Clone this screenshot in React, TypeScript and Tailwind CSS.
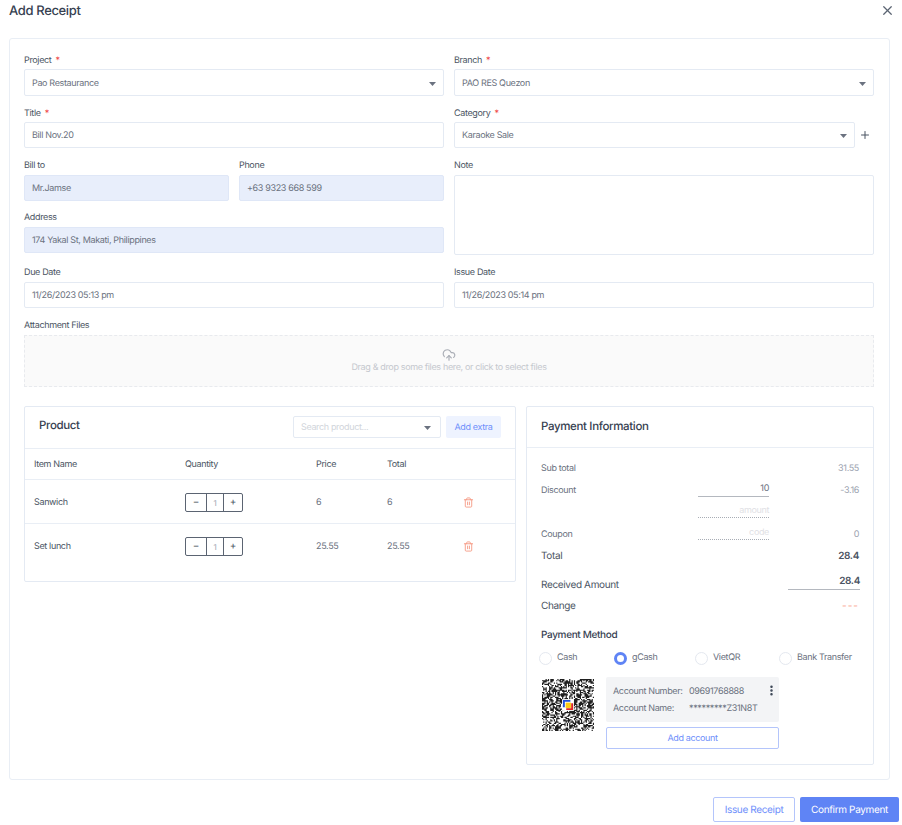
import React from "react";
import { X, Plus, Trash2, CloudUpload, EllipsisVertical } from "lucide-react";

const Caret = () => (
  <svg width="7" height="4" viewBox="0 0 7 4" className="shrink-0">
    <path d="M0 0h7L3.5 4z" fill="#6b7280" />
  </svg>
);

const Req = () => <span className="ml-[4px] text-[#ef4444]">*</span>;

function Label({ text, req, low }: { text: string; req?: boolean; low?: boolean }) {
  return (
    <div className={`h-[14px] text-[9px] leading-[9px] text-[#4b5563] ${low ? "pt-[1px]" : ""}`}>
      {text}
      {req && <Req />}
    </div>
  );
}

function Box({ children, blue, h = "h-[26px]" }: { children?: React.ReactNode; blue?: boolean; h?: string }) {
  return (
    <div
      className={`${h} flex items-center justify-between rounded-[2px] border pl-[7px] pr-[7px] pt-[2px] text-[9px] text-[#6b7280] ${
        blue ? "border-[#dfe7f7] bg-[#e8eefb]" : "border-[#e4eaf3] bg-white"
      }`}
    >
      {children}
    </div>
  );
}

function Field({ label, req, value, blue, select, h, low, className }: { label: string; req?: boolean; value: string; blue?: boolean; select?: boolean; h?: string; low?: boolean; className?: string }) {
  return (
    <div className={className}>
      <Label text={label} req={req} low={low} />
      <Box blue={blue} h={h}>
        <span>{value}</span>
        {select && <Caret />}
      </Box>
    </div>
  );
}

function Stepper() {
  return (
    <div className="flex h-[19px] w-[58px] items-stretch rounded-[2px] border border-[#5b6472] text-[#4b5563]">
      <div className="flex w-[20px] items-center justify-center text-[10px]">−</div>
      <div className="flex w-[18px] items-center justify-center border-x border-[#5b6472] text-[8px] text-[#9ca3af]">1</div>
      <div className="flex flex-1 items-center justify-center text-[10px]">+</div>
    </div>
  );
}

function ProductRow({ name, price, total }: { name: string; price: string; total: string }) {
  return (
    <div className="grid h-[44px] grid-cols-[151px_131px_71px_76px_1fr] items-center border-t border-[#e9eef5] pl-[9px] pt-[2px] text-[9px] text-[#6b7280]">
      <span className="text-[#4b5563]">{name}</span>
      <Stepper />
      <span>{price}</span>
      <span>{total}</span>
      <Trash2 size={11} color="#f59a84" />
    </div>
  );
}

function Radio({ label, on, className }: { label: string; on?: boolean; className: string }) {
  return (
    <div className={`flex items-center text-[9px] text-[#6b7280] ${className}`}>
      <span className={`mr-[5px] size-[13px] shrink-0 rounded-full ${on ? "border-[3.5px] border-[#5f84f5] bg-white" : "border border-[#e4e8ef] bg-white"}`} />
      {label}
    </div>
  );
}

const qr = (() => {
  const n = 44;
  let seed = 73;
  let d = "";
  for (let y = 0; y < n; y++) {
    for (let x = 0; x < n; x++) {
      seed = (seed * 1103515245 + 12345) & 0x7fffffff;
      if ((seed >> 16) % 100 < 52) d += `M${x} ${y}h1v1h-1z`;
    }
  }
  return d;
})();

function QrCode() {
  return (
    <svg width="52" height="52" viewBox="0 0 44 44" className="shrink-0">
      <rect width="44" height="44" fill="#fff" />
      <path d={qr} fill="#1f1f1f" />
      <rect x="17" y="17" width="10" height="10" fill="#fff" />
      <path d="M18.5 24V18.5H24" fill="none" stroke="#1d4ed8" strokeWidth="1.6" />
      <rect x="20" y="20" width="4.5" height="4.5" fill="#facc15" />
      <path d="M25.5 20.5V25.5H20.5" fill="none" stroke="#dc2626" strokeWidth="1.6" />
    </svg>
  );
}

const line = "border-b border-[#b4b8bf]";
const dotted = "border-b border-dotted border-[#a8adb5]";

export default function App() {
  return (
    <div className="h-[825px] w-[902px] overflow-hidden bg-white font-['Inter',sans-serif] tracking-[-0.35px] [text-rendering:geometricPrecision]">
      <div className="flex h-[38px] items-start justify-between pl-[9px] pr-[7px]">
        <h1 className="mt-[3px] text-[13px] font-medium leading-[17px] text-[#374151]">Add Receipt</h1>
        <X size={15} color="#5b6472" className="mt-[3px]" />
      </div>

      <div className="ml-[9px] h-[742px] w-[881px] rounded-[3px] border border-[#e9eef5] px-[14px] pt-[16px]">
        <div className="grid grid-cols-[420px_420px] grid-rows-[53px_53px_52px_55px_53px_66px] gap-x-[10px]">
          <Field label="Project" req low value="Pao Restaurance" select h="h-[27px]" />
          <Field label="Branch" req low value="PAO RES Quezon" select h="h-[27px]" />
          <Field label="Title" req low value="Bill Nov.20" />
          <div>
            <Label text="Category" req low />
            <div className="flex items-center">
              <div className="w-[401px]">
                <Box>
                  <span>Karaoke Sale</span>
                  <Caret />
                </Box>
              </div>
              <Plus size={12} color="#4b5563" className="ml-[4px]" />
            </div>
          </div>
          <div className="col-start-1 row-start-3 grid grid-cols-[205px_205px] gap-x-[10px]">
            <Field label="Bill to" value="Mr.Jamse" blue />
            <Field label="Phone" value="+63 9323 668 599" blue />
          </div>
          <Field className="col-start-1 row-start-4" label="Address" value="174 Yakal St, Makati, Philippines" blue />
          <div className="col-start-2 row-span-2 row-start-3">
            <Label text="Note" />
            <Box h="h-[80px]" />
          </div>
          <Field label="Due Date" value="11/26/2023 05:13 pm" />
          <Field label="Issue Date" value="11/26/2023 05:14 pm" />
          <div className="col-span-2">
            <Label text="Attachment Files" />
            <div className="flex h-[52px] flex-col items-center justify-center border border-dashed border-[#e8eaee] bg-[#fafafa] pt-[1px] text-[9px] text-[#c5c8ce]">
              <CloudUpload size={14} color="#a9adb5" />
              <span className="-mt-[1px]">Drag &amp; drop some files here, or click to select files</span>
            </div>
          </div>
        </div>

        <div className="mt-[19px] flex items-start gap-[10px]">
          <section className="h-[176px] w-[492px] rounded-[2px] border border-[#e4eaf3]">
            <div className="flex h-[41px] items-start pl-[14px] pr-[14px] pt-[9px]">
              <h2 className="mt-[1px] flex-1 text-[11.5px] font-medium leading-[16px] text-[#374151]">Product</h2>
              <div className="flex h-[22px] w-[148px] items-center justify-between rounded-[2px] border border-[#e4eaf3] pl-[7px] pr-[9px] pt-[1px] text-[9px] text-[#d1d5db]">
                <span>Search product...</span>
                <Caret />
              </div>
              <div className="ml-[5px] flex h-[22px] w-[55px] items-center justify-center rounded-[2px] bg-[#eef3ff] pt-[1px] text-[9px] text-[#6f8ffb]">Add extra</div>
            </div>
            <div className="grid h-[31px] grid-cols-[151px_131px_71px_1fr] items-center border-t border-[#e9eef5] pl-[9px] pt-[2px] text-[9px] text-[#4b5563]">
              <span>Item Name</span>
              <span>Quantity</span>
              <span>Price</span>
              <span>Total</span>
            </div>
            <ProductRow name="Sanwich" price="6" total="6" />
            <ProductRow name="Set lunch" price="25.55" total="25.55" />
          </section>

          <section className="h-[359px] w-[348px] rounded-[2px] border border-[#e4eaf3]">
            <div className="flex h-[40px] items-center pl-[14px] text-[11.5px] font-medium text-[#374151]">Payment Information</div>
            <div className="border-t border-[#e9eef5] pl-[14px] pr-[14px] pt-[10px] text-[9px] text-[#6b7280]">
              <div className="grid h-[22px] grid-cols-[157px_71px_90px] items-center">
                <span className="text-[#6b7280]">Sub total</span>
                <span />
                <span className="text-right text-[#9ca3af]">31.55</span>
              </div>
              <div className="grid h-[22px] grid-cols-[157px_71px_90px] items-center">
                <span>Discount</span>
                <div className={`mt-[1px] h-[16px] self-start text-right leading-[15px] ${line}`}>10</div>
                <span className="text-right text-[#9ca3af]">-3.16</span>
              </div>
              <div className="grid h-[22px] grid-cols-[157px_71px_90px]">
                <span />
                <div className={`mt-[1px] h-[15px] text-right leading-[15px] text-[#dfe1e5] ${dotted}`}>amount</div>
              </div>
              <div className="grid h-[22px] grid-cols-[157px_71px_90px] items-center">
                <span>Coupon</span>
                <div className={`mt-[1px] h-[15px] self-start text-right leading-[15px] text-[#dfe1e5] ${dotted}`}>code</div>
                <span className="text-right text-[#9ca3af]">0</span>
              </div>
              <div className="flex h-[20px] items-center justify-between text-[10px]">
                <span className="text-[#4b5563]">Total</span>
                <span className="font-semibold text-[#4b5563]">28.4</span>
              </div>
              <div className="mt-[7px] grid h-[24px] grid-cols-[247px_72px] items-center text-[10px] text-[#4b5563]">
                <span>Received Amount</span>
                <div className={`h-[17px] self-start text-right font-semibold leading-[16px] ${line}`}>28.4</div>
              </div>
              <div className="flex h-[18px] items-center justify-between text-[10px] text-[#4b5563]">
                <span>Change</span>
                <span className="font-semibold tracking-[1px] text-[#fbb6a6]">---</span>
              </div>
              <div className="mt-[13px] h-[14px] text-[10px] font-medium leading-[14px] text-[#374151]">Payment Method</div>
              <div className="-ml-[2px] mt-[9px] flex h-[14px] items-center">
                <Radio label="Cash" className="w-[75px]" />
                <Radio on label="gCash" className="w-[81px]" />
                <Radio label="VietQR" className="w-[84px]" />
                <Radio label="Bank Transfer" className="" />
              </div>
              <div className="mt-[12px] flex items-start">
                <div className="ml-[1px] mt-[2px]">
                  <QrCode />
                </div>
                <div className="ml-[12px] w-[173px]">
                  <div className="relative h-[45px] rounded-[2px] bg-[#f3f4f6] pl-[7px] pt-[6px] text-[9px] leading-[17px]">
                    <div className="flex">
                      <span className="w-[76px]">Account Number:</span>
                      <span>09691768888</span>
                    </div>
                    <div className="flex">
                      <span className="w-[76px]">Account Name:</span>
                      <span>*********Z31N8T</span>
                    </div>
                    <EllipsisVertical size={13} strokeWidth={2.6} color="#374151" className="absolute right-[1px] top-[7px]" />
                  </div>
                  <div className="mt-[5px] flex h-[22px] items-center justify-center rounded-[2px] border border-[#b4c5fb] pt-[1px] text-[9px] text-[#6f8ffb]">Add account</div>
                </div>
              </div>
            </div>
          </section>
        </div>
      </div>

      <div className="mt-[17px] flex justify-end gap-[5px] pr-[3px]">
        <div className="flex h-[25px] w-[82px] items-center justify-center rounded-[2px] border border-[#b4c5fb] pt-[1px] text-[10px] text-[#6f8ffb]">Issue Receipt</div>
        <div className="flex h-[25px] w-[99px] items-center justify-center rounded-[2px] bg-[#5f84f5] pt-[1px] text-[10px] text-white">Confirm Payment</div>
      </div>
    </div>
  );
}
